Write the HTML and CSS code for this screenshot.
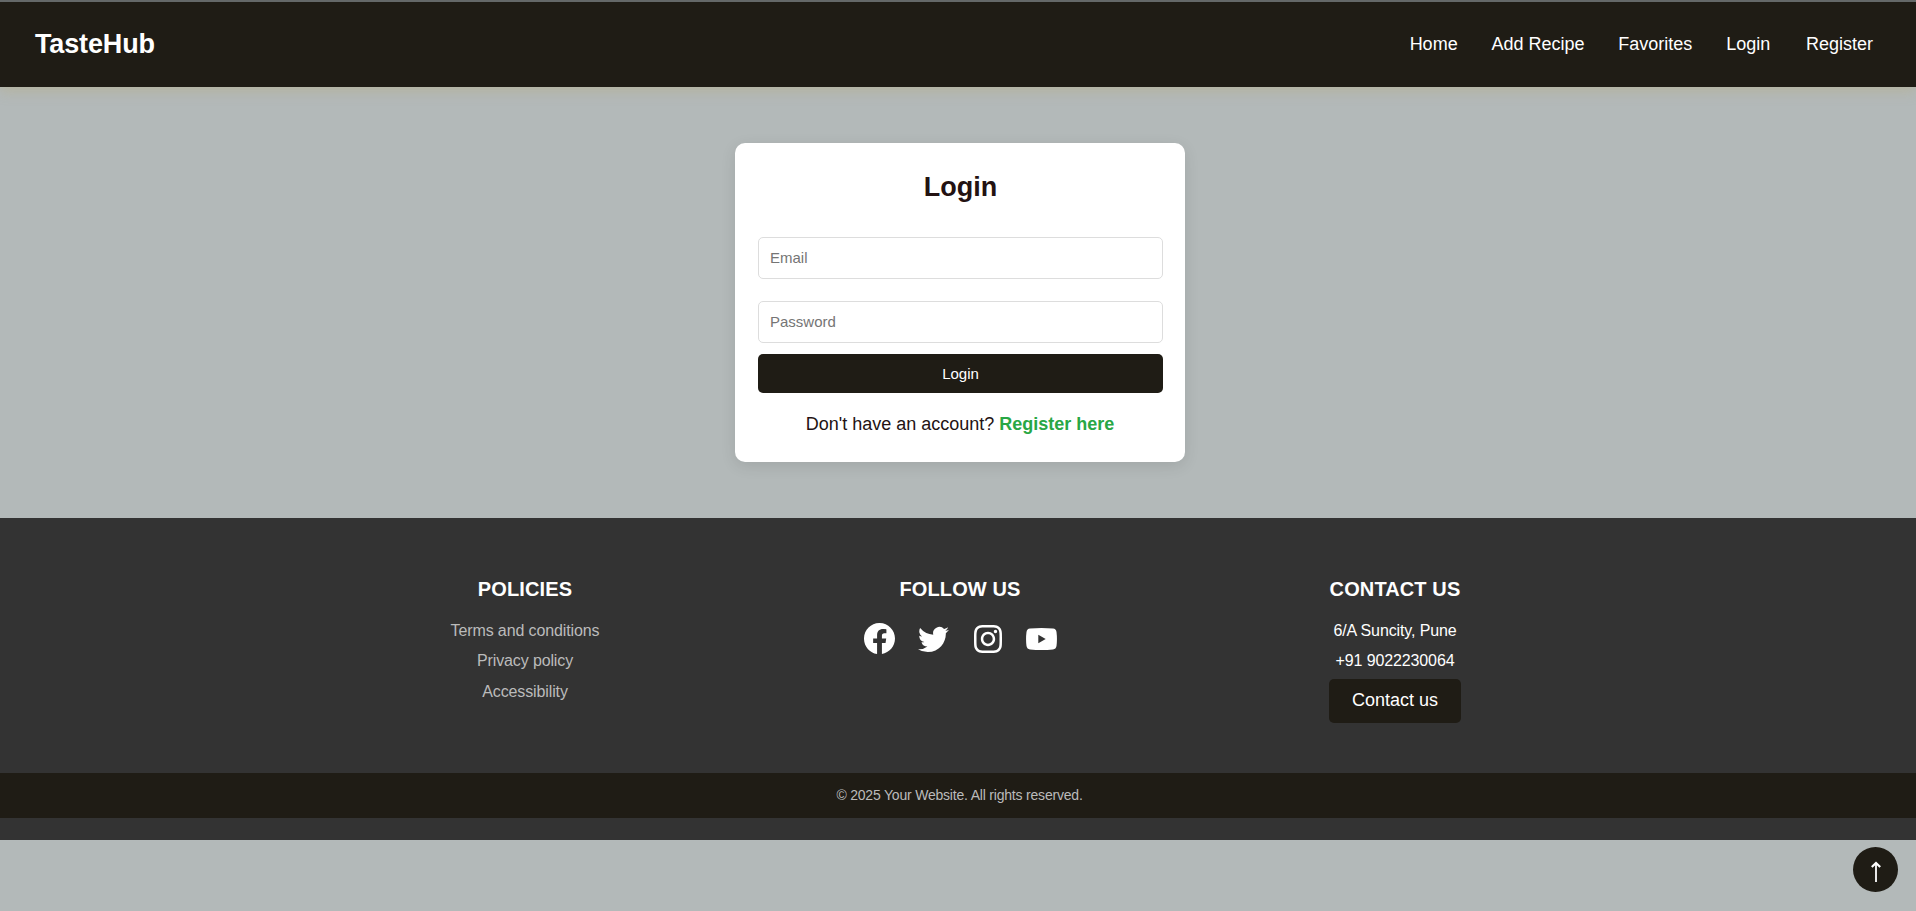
FILE: index.html
```html
<!DOCTYPE html>
<html lang="en">
<head>
<meta charset="utf-8">
<title>TasteHub - Login</title>
<link rel="stylesheet" href="styles.css">
</head>
<body>
<header class="navbar">
  <a class="brand">TasteHub</a>
  <nav class="nav-links">
    <a>Home</a><a>Add Recipe</a><a>Favorites</a><a>Login</a><a class="register">Register</a>
  </nav>
</header>
<main class="main">
  <form class="card">
    <h2 class="title">Login</h2>
    <input class="field" type="email" placeholder="Email">
    <input class="field" type="password" placeholder="Password">
    <button class="submit" type="button">Login</button>
    <p class="signup">Don't have an account? <a class="signup-link">Register here</a></p>
  </form>
</main>
<footer class="footer">
  <div class="columns">
    <section class="column">
      <h3 class="heading">POLICIES</h3>
      <a class="line muted">Terms and conditions</a>
      <a class="line muted">Privacy policy</a>
      <a class="line muted">Accessibility</a>
    </section>
    <section class="column">
      <h3 class="heading">FOLLOW US</h3>
      <div class="social">
        <svg class="facebook" viewBox="0 0 16 16"><path d="M16 8.049c0-4.446-3.582-8.05-8-8.05C3.58 0-.002 3.603-.002 8.05c0 4.017 2.926 7.347 6.75 7.951v-5.625h-2.03V8.05H6.75V6.275c0-2.017 1.195-3.131 3.022-3.131.876 0 1.791.157 1.791.157v1.98h-1.009c-.993 0-1.303.621-1.303 1.258v1.51h2.218l-.354 2.326H9.25V16c3.824-.604 6.75-3.934 6.75-7.951z"/></svg>
        <svg class="twitter" viewBox="0 0 16 16"><path d="M5.026 15c6.038 0 9.341-5.003 9.341-9.334q.002-.211-.006-.422A6.7 6.7 0 0 0 16 3.542a6.7 6.7 0 0 1-1.889.518 3.3 3.3 0 0 0 1.447-1.817 6.5 6.5 0 0 1-2.087.793A3.286 3.286 0 0 0 7.875 6.03a9.32 9.32 0 0 1-6.767-3.429 3.29 3.29 0 0 0 1.018 4.382A3.3 3.3 0 0 1 .64 6.575v.045a3.29 3.29 0 0 0 2.632 3.218 3.2 3.2 0 0 1-.865.115 3 3 0 0 1-.614-.057 3.28 3.28 0 0 0 3.067 2.277A6.6 6.6 0 0 1 .78 13.58a6 6 0 0 1-.78-.045A9.34 9.34 0 0 0 5.026 15"/></svg>
        <svg class="instagram" viewBox="0 0 448 448"><path d="M224 109.100c-63.600 0-114.900 51.300-114.900 114.900s51.300 114.900 114.900 114.900 114.900-51.300 114.900-114.900-51.300-114.900-114.900-114.900zm0 189.600c-41.100 0-74.700-33.500-74.700-74.700s33.500-74.700 74.700-74.700 74.700 33.500 74.700 74.700-33.600 74.700-74.700 74.700zm146.400-194.300c0 14.900-12 26.800-26.800 26.800-14.900 0-26.800-12-26.800-26.800s12-26.800 26.800-26.800 26.800 12 26.800 26.800zm76.100 27.200c-1.700-35.900-9.900-67.700-36.200-93.900-26.200-26.200-58-34.400-93.900-36.200-37-2.100-147.900-2.100-184.900 0-35.800 1.700-67.600 9.900-93.900 36.100s-34.400 58-36.200 93.900c-2.100 37-2.100 147.900 0 184.900 1.700 35.900 9.900 67.700 36.200 93.900s58 34.400 93.900 36.200c37 2.100 147.900 2.100 184.900 0 35.900-1.700 67.700-9.900 93.900-36.200 26.200-26.200 34.400-58 36.200-93.900 2.100-37 2.100-147.800 0-184.800zM398.800 356c-7.800 19.600-22.900 34.700-42.600 42.600-29.500 11.700-99.500 9-132.100 9s-102.700 2.600-132.100-9c-19.600-7.800-34.700-22.900-42.600-42.600-11.700-29.500-9-99.500-9-132.100s-2.600-102.700 9-132.100c7.800-19.600 22.900-34.700 42.600-42.600 29.500-11.700 99.500-9 132.100-9s102.700-2.600 132.100 9c19.600 7.800 34.700 22.900 42.600 42.600 11.700 29.500 9 99.500 9 132.100s2.700 102.700-9 132.100z"/></svg>
        <svg class="youtube" viewBox="0 0 31 22"><path fill-rule="evenodd" d="M4 .6Q15.500-.5 27 .6Q30 .9 30.500 4Q31.400 11 30.500 18Q30 21.100 27 21.400Q15.500 22.500 4 21.400Q1 21.100.5 18Q-.4 11 .5 4Q1 .9 4 .6ZM12.300 6.800V15.200L19.700 11Z"/></svg>
      </div>
    </section>
    <section class="column">
      <h3 class="heading">CONTACT US</h3>
      <span class="line">6/A Suncity, Pune</span>
      <span class="line">+91 9022230064</span>
      <button class="contact" type="button">Contact us</button>
    </section>
  </div>
  <div class="copyright">© 2025 Your Website. All rights reserved.</div>
</footer>
<button class="to-top" type="button" aria-label="Back to top"><svg viewBox="0 0 12 22"><path d="M6 21V2"/><path class="tip" d="M1.800 6L6 2L10.200 6"/></svg></button>
</body>
</html>
```
FILE: styles.css
```css
* { box-sizing: border-box; }
body {
  margin: 0;
  min-height: 911px;
  overflow: hidden;
  background: #b3b9b9;
  color: #231212;
  font-family: "Liberation Sans", Arial, sans-serif;
  font-size: 18px;
}
h2, h3, p { margin: 0; }
button, input { font-family: inherit; }
.navbar {
  position: relative;
  height: 87px;
  padding: 0 43px 0 35px;
  border-top: 2px solid #646868;
  display: flex;
  align-items: center;
  justify-content: space-between;
  background: #1f1c15;
  color: #fff;
  box-shadow: 0 4px 12px rgba(185, 170, 110, .35);
}
.brand { font-size: 27px; font-weight: 700; letter-spacing: -.15px; }
.nav-links { display: flex; gap: 33.800px; }
.register { margin-left: 2px; }
.main {
  height: 431px;
  padding: 56px 0 0 4px;
  display: flex;
  justify-content: center;
}
.card {
  width: 450px;
  height: 319px;
  padding: 24px 22px 0 23px;
  display: flex;
  flex-direction: column;
  background: #fff;
  border-radius: 10px;
  box-shadow: 0 4px 15px rgba(0, 0, 0, .1);
}
.title {
  height: 70px;
  line-height: 40px;
  font-size: 27px;
  text-align: center;
}
.field {
  height: 42px;
  flex: none;
  margin-bottom: 22px;
  padding: 0 11px 2px;
  border: 1px solid #ddd;
  border-radius: 5px;
  font-size: 15px;
  outline: none;
}
.field::placeholder { color: #757575; }
.field + .field { margin-bottom: 11px; }
.submit {
  height: 39px;
  border: 0;
  border-radius: 5px;
  background: #1f1c15;
  color: #fff;
  font-size: 15px;
}
.signup { margin-top: 20px; padding-right: 1px; text-align: center; line-height: 22px; }
.signup-link { color: #28a745; font-weight: 700; }
.footer {
  height: 322px;
  background: #333;
  color: #fff;
}
.columns {
  height: 255px;
  padding: 57px 0 0 4px;
  display: grid;
  grid-template-columns: repeat(3, 435px);
  justify-content: center;
}
.column { display: flex; flex-direction: column; align-items: center; }
.heading { height: 41px; line-height: 28px; font-size: 20px; letter-spacing: .12px; }
.line { height: 30.400px; line-height: 30px; font-size: 16px; letter-spacing: -.12px; }
.muted { color: #bbb; }
.social { display: flex; align-items: center; gap: 24px; height: 45px; fill: #fff; }
.facebook, .twitter { width: 31px; height: 31px; }
.twitter { margin: 0 1px 0 -1px; }
.instagram { width: 28px; height: 28px; }
.youtube { width: 31px; height: 22px; }
.contact {
  width: 132px;
  height: 44px;
  margin-top: 2px;
  border: 0;
  border-radius: 5px;
  background: #1f1c15;
  color: #fff;
  font-size: 18px;
}
.copyright {
  height: 45px;
  padding-left: 3px;
  line-height: 45px;
  background: #1f1c15;
  color: #bbb;
  font-size: 14px;
  letter-spacing: -.2px;
  text-align: center;
}
.to-top {
  position: fixed;
  right: 18px;
  bottom: 19px;
  width: 45px;
  height: 45px;
  padding: 0;
  display: flex;
  align-items: center;
  justify-content: center;
  border: 0;
  border-radius: 50%;
  background: #1f1c15;
}
.to-top svg { width: 12px; height: 22px; margin-top: 5px; fill: none; stroke: #fff; stroke-width: 1.800; }
.tip { stroke-width: 2.200; }
```
